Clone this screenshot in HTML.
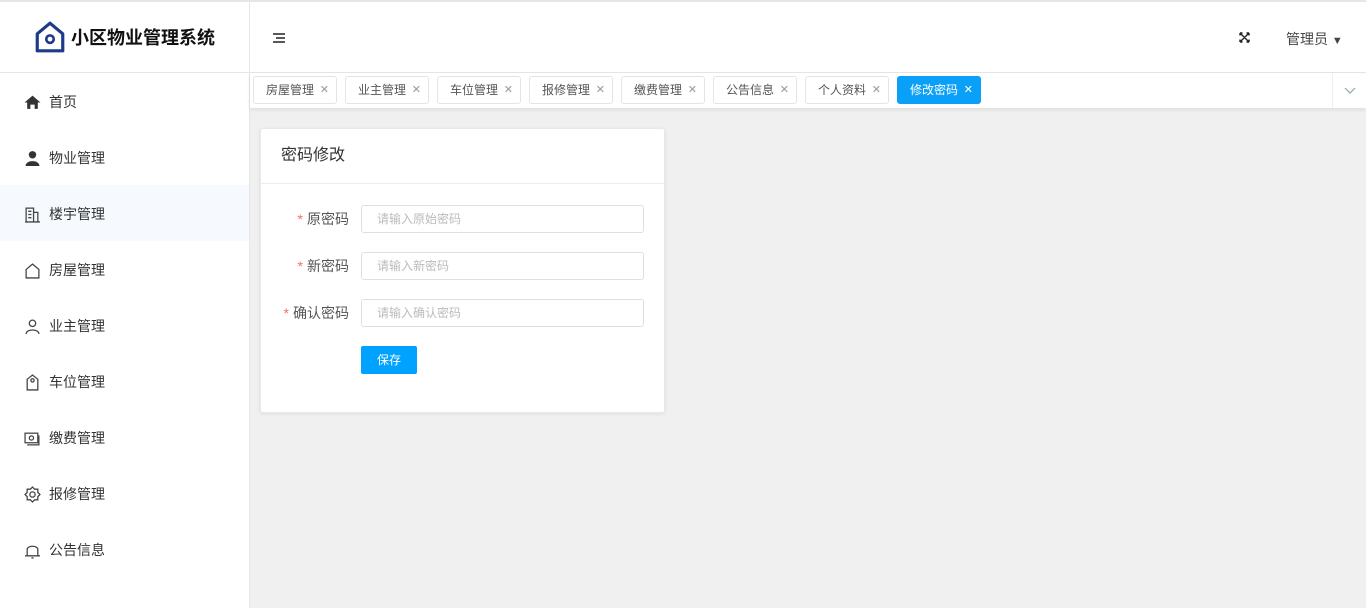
<!DOCTYPE html>
<html><head><meta charset="utf-8"><style>
*{box-sizing:border-box;margin:0;padding:0}
body{width:1366px;height:608px;overflow:hidden;font-family:"Liberation Sans","Noto Sans CJK SC",sans-serif;background:#f0f0f0;position:relative;font-size:14px;color:#333}
.topline{position:absolute;left:0;top:0;width:1366px;height:2px;background:#e6e6e6}
.side{position:absolute;left:0;top:2px;width:250px;height:606px;background:#fff;border-right:1px solid #e6e6e6}
.logo{height:71px;border-bottom:1px solid #e6e6e6;display:flex;align-items:center;padding-left:34px;font-weight:bold;font-size:18px;color:#111}
.logo svg{margin-right:5px}
.item{height:56px;display:flex;align-items:center;padding-left:24px;padding-top:2px;font-size:14px;color:#333}
.item svg{width:17px;height:17px;margin-right:8px;flex:none}
.item.act{background:#f6fafe}
.head{position:absolute;left:250px;top:2px;width:1116px;height:71px;background:#fff;border-bottom:1px solid #e6e6e6}
.tags{position:absolute;left:250px;top:73px;width:1116px;height:35px;background:#fff;box-shadow:0 2px 4px rgba(0,0,0,.08)}
.tag{position:absolute;top:3px;width:84px;height:28px;border:1px solid #e4e4e4;border-radius:3px;font-size:12px;color:#555;line-height:27px;padding-left:12px}
.tag span{position:absolute;right:7px;top:0;color:#999;font-size:11px}
.tag.a{background:#0aa0f7;border-color:#0aa0f7;color:#fff}
.tag.a span{color:#fff}
.card{position:absolute;left:260px;top:128px;width:405px;height:285px;background:#fff;border:1px solid #e8e8e8;border-radius:3px;box-shadow:0 1px 4px rgba(0,0,0,.08)}
.ct{height:55px;border-bottom:1px solid #ececec;padding-left:20px;line-height:54px;font-size:16px;color:#333}
.lab{position:absolute;right:315px;font-size:14px;color:#555;white-space:nowrap}
.lab b{color:#f56c6c;font-weight:normal;margin-right:4px}
.inp{position:absolute;left:100px;width:283px;height:28px;border:1px solid #dcdfe6;border-radius:3px;font-size:12px;color:#bbb;line-height:26px;padding-left:15px}
.btn{position:absolute;left:100px;top:217px;width:56px;height:28px;background:#00a2ff;border-radius:2px;color:#fff;font-size:12px;text-align:center;line-height:28px}
</style></head><body>
<div class="topline"></div>
<div class="side">
<div class="logo"><svg width="32" height="34" viewBox="0 0 30 32"><path d="M3 13 L15 3 L27 13 V29 H3 Z" fill="none" stroke="#1e3a8a" stroke-width="3" stroke-linejoin="round"/><circle cx="15" cy="18" r="3.5" fill="none" stroke="#1e3a8a" stroke-width="2.5"/></svg>小区物业管理系统</div>
<div class="item"><svg viewBox="0 0 16 16"><path d="M0.5 8 L8 1.5 L15.5 8 H13 V14 H10 V10 H6 V14 H3 V8Z" fill="#333"/></svg>首页</div>
<div class="item"><svg viewBox="0 0 16 16"><circle cx="8" cy="4.5" r="3.5" fill="#333"/><path d="M1.5 15 C1.5 9 14.5 9 14.5 15Z" fill="#333"/></svg>物业管理</div>
<div class="item act"><svg viewBox="0 0 16 16" fill="none" stroke="#444" stroke-width="1.2"><path d="M2 15 V2 H9 V15 M9 6 H13 V15 M1 15 H15 M4 5 H7 M4 8 H7 M4 11 H7"/></svg>楼宇管理</div>
<div class="item"><svg viewBox="0 0 16 16" fill="none" stroke="#444" stroke-width="1.2"><path d="M2 7 L8 2 L14 7 V15 H2Z"/></svg>房屋管理</div>
<div class="item"><svg viewBox="0 0 16 16" fill="none" stroke="#444" stroke-width="1.2"><circle cx="8" cy="5" r="3"/><path d="M2 15 C2 10 14 10 14 15"/></svg>业主管理</div>
<div class="item"><svg viewBox="0 0 16 16" fill="none" stroke="#444" stroke-width="1.2"><path d="M3 5 L8 1 L13 5 V15 H3Z"/><circle cx="8" cy="6" r="1.5"/></svg>车位管理</div>
<div class="item"><svg viewBox="0 0 16 16" fill="none" stroke="#444" stroke-width="1.2"><rect x="1" y="3" width="12" height="9"/><circle cx="7" cy="7.5" r="2"/><path d="M14 5 V14 H3"/></svg>缴费管理</div>
<div class="item"><svg viewBox="0 0 16 16" fill="none" stroke="#444" stroke-width="1.2"><circle cx="8" cy="8" r="2.5"/><path d="M8 1 L10 3 L13 3 L13 6 L15 8 L13 10 L13 13 L10 13 L8 15 L6 13 L3 13 L3 10 L1 8 L3 6 L3 3 L6 3Z"/></svg>报修管理</div>
<div class="item"><svg viewBox="0 0 16 16" fill="none" stroke="#444" stroke-width="1.2"><path d="M3 13 V7 C3 3 13 3 13 7 V13 Z M1 13 H15 M7 15 H9"/></svg>公告信息</div>
</div>
<div class="head">
<svg style="position:absolute;left:23px;top:31px" width="12" height="10" viewBox="0 0 12 10" stroke="#222" stroke-width="1.5"><path d="M0 1H12M3 5H12M0 9H12"/></svg>
<svg style="position:absolute;left:989px;top:30px" width="11" height="11" viewBox="0 0 11 11" stroke="#222" stroke-width="1.4" fill="none"><path d="M1 1L10 10M10 1L1 10M1 1H3.5M1 1V3.5M10 1H7.5M10 1V3.5M1 10H3.5M1 10V7.5M10 10H7.5M10 10V7.5"/></svg>
<div style="position:absolute;left:1036px;top:27px;font-size:14px;color:#444">管理员 <span style="font-size:11px">▼</span></div>
</div>
<div class="tags">
<div class="tag" style="left:3px">房屋管理<span>✕</span></div>
<div class="tag" style="left:95px">业主管理<span>✕</span></div>
<div class="tag" style="left:187px">车位管理<span>✕</span></div>
<div class="tag" style="left:279px">报修管理<span>✕</span></div>
<div class="tag" style="left:371px">缴费管理<span>✕</span></div>
<div class="tag" style="left:463px">公告信息<span>✕</span></div>
<div class="tag" style="left:555px">个人资料<span>✕</span></div>
<div class="tag a" style="left:647px">修改密码<span>✕</span></div>
<div style="position:absolute;left:1082px;top:0;width:34px;height:35px;border-left:1px solid #eee;background:#fff"><svg style="position:absolute;left:11px;top:14px" width="12" height="7" viewBox="0 0 12 7" fill="none" stroke="#8aa" stroke-width="1.2"><path d="M1 1L6 6L11 1"/></svg></div>
</div>
<div class="card">
<div class="ct">密码修改</div>
<div class="lab" style="top:80px"><b>*</b>原密码</div><div class="inp" style="top:76px">请输入原始密码</div>
<div class="lab" style="top:127px"><b>*</b>新密码</div><div class="inp" style="top:123px">请输入新密码</div>
<div class="lab" style="top:174px"><b>*</b>确认密码</div><div class="inp" style="top:170px">请输入确认密码</div>
<div class="btn">保存</div>
</div>
</body></html>
